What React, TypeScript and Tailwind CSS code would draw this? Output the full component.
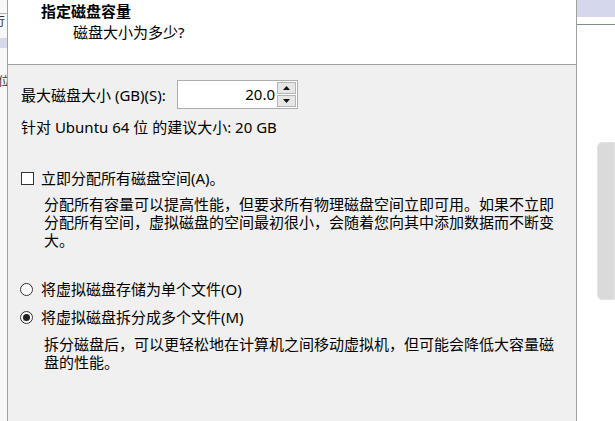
export default function App() {
  return (
    <div className="flex h-[421px] w-[615px] overflow-hidden bg-white font-['Noto_Sans','Noto_Sans_CJK_SC',sans-serif] text-[15px] text-black">
      {/* background window sliver on the left */}
      <div className="flex w-[7px] shrink-0 flex-col overflow-hidden bg-[#f8f8f8]">
        <div className="mt-[13px] h-px w-full bg-[#b4b4b4]" />
        <div className="-ml-[7px] mt-[2px] whitespace-nowrap text-[12px] leading-[12px] text-[#333]">行</div>
        <div className="mt-[10px] h-[10px] w-full bg-[#d6d8ec]" />
        <div className="-ml-[2px] mt-[28px] whitespace-nowrap text-[12px] leading-[12px] text-[#333]">位</div>
      </div>

      {/* dialog */}
      <div className="flex w-[570px] shrink-0 flex-col border-x border-[#a0a0a0]">
        <div className="h-[65px] shrink-0 border-b border-[#a0a0a0] bg-white pl-[33px] pt-[1px]">
          <div className="font-bold leading-[20px]">指定磁盘容量</div>
          <div className="mt-[1px] pl-[32px] leading-[20px]">磁盘大小为多少?</div>
        </div>

        <div className="flex-1 bg-[#f0f0f0] pl-[13px] pt-[15px]">
          <div className="flex h-[29px] items-center">
            <div className="w-[156px] whitespace-nowrap leading-[20px]">最大磁盘大小 (GB)(S):</div>
            <div className="flex h-[29px] w-[121px] border border-[#abadb3] bg-white">
              <div className="flex-1 pr-[2px] text-right leading-[27px]">20.0</div>
              <div className="flex w-[20px] flex-col gap-[1px] py-[1px] pr-[1px]">
                <div className="flex flex-1 items-center justify-center border border-[#b4b4b4] bg-[#e6e6e6]">
                  <svg width="7" height="4" viewBox="0 0 7 4">
                    <path d="M0 4 L3.5 0 L7 4 Z" fill="#111" />
                  </svg>
                </div>
                <div className="flex flex-1 items-center justify-center border border-[#b4b4b4] bg-[#e6e6e6]">
                  <svg width="7" height="4" viewBox="0 0 7 4">
                    <path d="M0 0 L7 0 L3.5 4 Z" fill="#111" />
                  </svg>
                </div>
              </div>
            </div>
          </div>

          <div className="mt-[8px] whitespace-nowrap leading-[20px]">针对 Ubuntu 64 位 的建议大小: 20 GB</div>

          <div className="mt-[31px] flex h-[20px] items-center">
            <div className="h-[13px] w-[13px] border border-[#333] bg-white" />
            <div className="ml-[7px] whitespace-nowrap leading-[20px]">立即分配所有磁盘空间(A)。</div>
          </div>
          <div className="mt-[7px] pl-[23px] leading-[18px]">
            <div className="whitespace-nowrap">分配所有容量可以提高性能，但要求所有物理磁盘空间立即可用。如果不立即</div>
            <div className="whitespace-nowrap">分配所有空间，虚拟磁盘的空间最初很小，会随着您向其中添加数据而不断变</div>
            <div className="whitespace-nowrap">大。</div>
          </div>

          <div className="mt-[30px] flex h-[20px] items-center">
            <div className="-ml-[1px] h-[13px] w-[13px] rounded-full border border-[#333] bg-white" />
            <div className="ml-[8px] whitespace-nowrap leading-[20px]">将虚拟磁盘存储为单个文件(O)</div>
          </div>
          <div className="mt-[8px] flex h-[20px] items-center">
            <div className="-ml-[1px] flex h-[13px] w-[13px] items-center justify-center rounded-full border border-[#333] bg-white">
              <div className="h-[7px] w-[7px] rounded-full bg-[#222]" />
            </div>
            <div className="ml-[8px] whitespace-nowrap leading-[20px]">将虚拟磁盘拆分成多个文件(M)</div>
          </div>
          <div className="mt-[8px] pl-[23px] leading-[18px]">
            <div className="whitespace-nowrap">拆分磁盘后，可以更轻松地在计算机之间移动虚拟机，但可能会降低大容量磁</div>
            <div className="whitespace-nowrap">盘的性能。</div>
          </div>
        </div>
      </div>

      {/* background window sliver on the right */}
      <div className="flex w-[38px] shrink-0 flex-col bg-white">
        <div className="h-[17px] bg-[#d5d8ec]" />
        <div className="mt-[7px] h-px bg-[#7f8f8f]" />
        <div className="ml-[20px] mt-[117px] h-[158px] rounded-l-[5px] border border-[#e4e4e4] bg-[#dadada]" />
      </div>
    </div>
  );
}
